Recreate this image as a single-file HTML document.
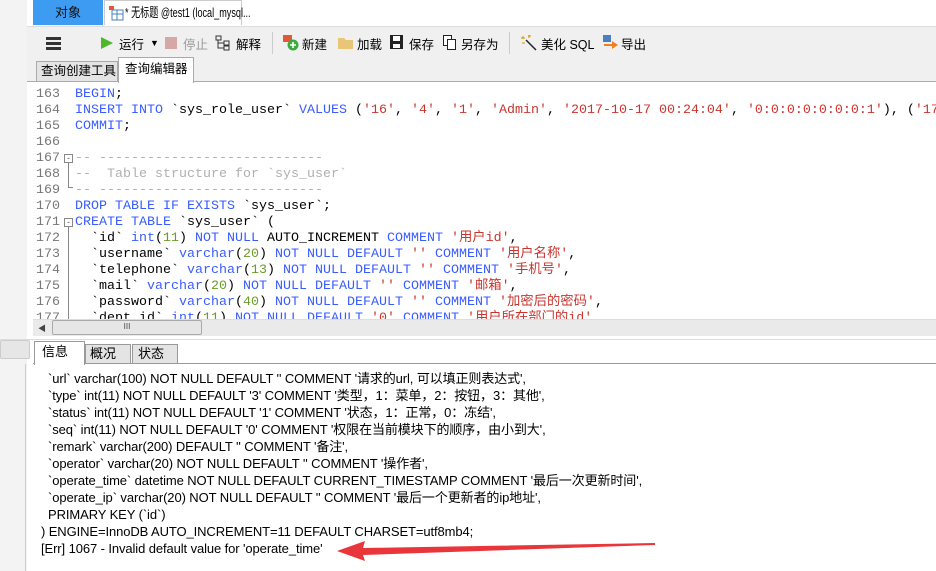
<!DOCTYPE html>
<html><head><meta charset="utf-8"><style>
*{margin:0;padding:0;box-sizing:border-box}
body{width:936px;height:571px;overflow:hidden;background:#fff;font-family:"Liberation Sans","Noto Sans CJK SC",sans-serif;font-size:12px;color:#000;position:relative}
.abs{position:absolute;white-space:nowrap}
.code{font-family:"Liberation Mono","Noto Sans CJK SC",monospace;font-size:13.33px;white-space:pre;line-height:16px}
.k{color:#3a5cff}
.s{color:#c8352e}
.n{color:#6a9a2a}
.c{color:#b0b0b0}
.ln{color:#777}
.tb span{position:absolute;top:34px;font-size:12.5px;white-space:nowrap}
.log{font-size:13px;line-height:17px;white-space:pre;letter-spacing:-0.1px}
</style></head><body>
<div class="abs" style="left:0;top:0;width:936px;height:26px;background:#fff"></div>
<div class="abs" style="left:0;top:0;width:27px;height:571px;background:#f3f3f3"></div>
<div class="abs" style="left:33px;top:0;width:70px;height:25px;background:#3d9bf2;color:#111;font-size:13px;text-align:center;line-height:25px">对象</div>
<div class="abs" style="left:104px;top:0;width:138px;height:25px;border:1px solid #ccc;border-bottom:none"></div>
<div class="abs" style="left:125px;top:0;font-size:13px;line-height:25px;transform:scaleX(0.7);transform-origin:0 50%">* 无标题 @test1 (local_mysql...</div>
<svg class="abs" style="left:108px;top:5px" width="16" height="16"><rect x="1" y="1" width="5" height="4" fill="#e05a3a"/><rect x="4" y="5" width="11" height="10" fill="#fff" stroke="#4a7fc0"/><line x1="4" y1="9" x2="15" y2="9" stroke="#4a7fc0"/><line x1="9" y1="5" x2="9" y2="15" stroke="#4a7fc0"/></svg>
<div class="abs" style="left:27px;top:26px;width:909px;height:32px;background:#f0f0f0;border-top:1px solid #ddd"></div>
<div class="abs tb" style="left:0;top:0;width:936px;height:60px">
<div class="abs" style="left:46px;top:37px;width:15px;height:3px;background:#333;box-shadow:0 5px 0 #333,0 10px 0 #333"></div>
<svg class="abs" style="left:100px;top:36px" width="14" height="14"><polygon points="1,1 13,7 1,13" fill="#4cb82a"/></svg>
<span style="left:119px">运行</span><span style="left:150px;font-size:9px;top:38px">▼</span>
<div class="abs" style="left:165px;top:37px;width:12px;height:12px;background:#d6a7a7"></div>
<span style="left:183px;color:#999">停止</span>
<svg class="abs" style="left:215px;top:35px" width="16" height="16" fill="none" stroke="#333"><rect x="1" y="1" width="5" height="4"/><rect x="9" y="6" width="5" height="4"/><rect x="9" y="11" width="5" height="4"/><path d="M3 5v8h6M3 8h6"/></svg>
<span style="left:236px">解释</span>
<div class="abs" style="left:272px;top:32px;width:1px;height:22px;background:#ccc"></div>
<svg class="abs" style="left:282px;top:34px" width="17" height="17"><rect x="1" y="1" width="9" height="7" fill="#e05a3a"/><circle cx="11" cy="11" r="5.5" fill="#3caa3c"/><path d="M11 8v6M8 11h6" stroke="#fff" stroke-width="1.6"/></svg>
<span style="left:302px">新建</span>
<svg class="abs" style="left:337px;top:36px" width="17" height="14"><path d="M1 2h6l2 2h7v9H1z" fill="#e8c676"/></svg>
<span style="left:357px">加载</span>
<svg class="abs" style="left:389px;top:34px" width="15" height="16"><rect x="1" y="1" width="13" height="14" fill="#222"/><rect x="4" y="2" width="7" height="5" fill="#fff"/><rect x="4" y="10" width="7" height="4" fill="#fff"/></svg>
<span style="left:409px">保存</span>
<svg class="abs" style="left:442px;top:34px" width="15" height="16" fill="#fff" stroke="#222"><rect x="1.5" y="1.5" width="8" height="10"/><rect x="5.5" y="5.5" width="8" height="10"/></svg>
<span style="left:461px">另存为</span>
<div class="abs" style="left:509px;top:32px;width:1px;height:22px;background:#ccc"></div>
<svg class="abs" style="left:520px;top:34px" width="17" height="17" stroke="#222" stroke-width="1.5"><path d="M6 6l10 10"/><path d="M3 2v3M1 4h4M9 1v3M8 2h3M2 9h3" stroke="#c90" stroke-width="1"/></svg>
<span style="left:541px">美化 SQL</span>
<svg class="abs" style="left:602px;top:34px" width="17" height="17"><rect x="1" y="1" width="8" height="7" fill="#4a7fc0"/><path d="M2 10h8V7l6 4-6 4v-3H2z" fill="#f08020"/></svg>
<span style="left:621px">导出</span>
</div>
<div class="abs" style="left:27px;top:58px;width:909px;height:24px;background:#f0f0f0;border-bottom:1px solid #aaa"></div>
<div class="abs" style="left:36px;top:61px;width:82px;height:21px;background:#e4e4e4;border:1px solid #aaa;font-size:12.5px;line-height:19px;padding-left:4px">查询创建工具</div>
<div class="abs" style="left:118px;top:57px;width:76px;height:26px;background:#fff;border:1px solid #aaa;border-bottom:none;font-size:12.5px;line-height:22px;padding-left:6px">查询编辑器</div>
<div class="abs" style="left:33px;top:83px;width:903px;height:236px;background:#fff;overflow:hidden">
<div class="abs code ln" style="left:3px;top:4px">163
164
165
166
167
168
169
170
171
172
173
174
175
176
177</div>
<div class="abs" style="left:31px;top:71px;width:9px;height:9px;border:1px solid #888;font-size:9px;line-height:6px;text-align:center;color:#555">-</div>
<div class="abs" style="left:35px;top:80px;width:5px;height:25px;border-left:1px solid #888;border-bottom:1px solid #888"></div>
<div class="abs" style="left:31px;top:135px;width:9px;height:9px;border:1px solid #888;font-size:9px;line-height:6px;text-align:center;color:#555">-</div>
<div class="abs" style="left:35px;top:144px;width:1px;height:100px;background:#888"></div>
<div class="abs code" style="left:42px;top:4px"><span class="k">BEGIN</span>;
<span class="k">INSERT INTO</span> `sys_role_user` <span class="k">VALUES</span> (<span class="s">'16'</span>, <span class="s">'4'</span>, <span class="s">'1'</span>, <span class="s">'Admin'</span>, <span class="s">'2017-10-17 00:24:04'</span>, <span class="s">'0:0:0:0:0:0:0:1'</span>), (<span class="s">'17</span>
<span class="k">COMMIT</span>;

<span class="c">-- ----------------------------</span>
<span class="c">--  Table structure for `sys_user`</span>
<span class="c">-- ----------------------------</span>
<span class="k">DROP TABLE IF EXISTS</span> `sys_user`;
<span class="k">CREATE TABLE</span> `sys_user` (
  `id` <span class="k">int</span>(<span class="n">11</span>) <span class="k">NOT NULL</span> AUTO_INCREMENT <span class="k">COMMENT</span> <span class="s">'用户id'</span>,
  `username` <span class="k">varchar</span>(<span class="n">20</span>) <span class="k">NOT NULL DEFAULT</span> <span class="s">''</span> <span class="k">COMMENT</span> <span class="s">'用户名称'</span>,
  `telephone` <span class="k">varchar</span>(<span class="n">13</span>) <span class="k">NOT NULL DEFAULT</span> <span class="s">''</span> <span class="k">COMMENT</span> <span class="s">'手机号'</span>,
  `mail` <span class="k">varchar</span>(<span class="n">20</span>) <span class="k">NOT NULL DEFAULT</span> <span class="s">''</span> <span class="k">COMMENT</span> <span class="s">'邮箱'</span>,
  `password` <span class="k">varchar</span>(<span class="n">40</span>) <span class="k">NOT NULL DEFAULT</span> <span class="s">''</span> <span class="k">COMMENT</span> <span class="s">'加密后的密码'</span>,
  `dept_id` <span class="k">int</span>(<span class="n">11</span>) <span class="k">NOT NULL DEFAULT</span> <span class="s">'0'</span> <span class="k">COMMENT</span> <span class="s">'用户所在部门的id'</span>,</div>
</div>
<div class="abs" style="left:33px;top:319px;width:903px;height:17px;background:#eaeaea;border-top:1px solid #ddd"></div>
<div class="abs" style="left:38px;top:323px;font-size:8px;color:#444">◀</div>
<div class="abs" style="left:52px;top:320px;width:150px;height:15px;background:#e6e6e6;border:1px solid #aaa;border-radius:2px;font-size:8px;text-align:center;line-height:12px;color:#444">III</div>
<div class="abs" style="left:0;top:339px;width:936px;height:1px;background:#ddd"></div>
<div class="abs" style="left:0;top:340px;width:30px;height:19px;background:#e6e6e6;border:1px solid #ccc;border-radius:2px"></div>
<div class="abs" style="left:33px;top:340px;width:903px;height:24px;background:#fff;border-bottom:1px solid #999"></div>
<div class="abs" style="left:34px;top:341px;width:51px;height:24px;background:#fff;border:1px solid #999;border-bottom:none;font-size:13px;padding-left:7px;line-height:20px">信息</div>
<div class="abs" style="left:85px;top:344px;width:46px;height:20px;background:#e4e4e4;border:1px solid #999;font-size:13px;padding-left:4px;line-height:18px">概况</div>
<div class="abs" style="left:132px;top:344px;width:46px;height:20px;background:#e4e4e4;border:1px solid #999;font-size:13px;padding-left:5px;line-height:18px">状态</div>
<div class="abs" style="left:25px;top:364px;width:1px;height:207px;background:#ccc"></div>
<div class="abs log" style="left:41px;top:370px">  `url` varchar(100) NOT NULL DEFAULT '' COMMENT '请求的url, 可以填正则表达式',
  `type` int(11) NOT NULL DEFAULT '3' COMMENT '类型，1：菜单，2：按钮，3：其他',
  `status` int(11) NOT NULL DEFAULT '1' COMMENT '状态，1：正常，0：冻结',
  `seq` int(11) NOT NULL DEFAULT '0' COMMENT '权限在当前模块下的顺序，由小到大',
  `remark` varchar(200) DEFAULT '' COMMENT '备注',
  `operator` varchar(20) NOT NULL DEFAULT '' COMMENT '操作者',
  `operate_time` datetime NOT NULL DEFAULT CURRENT_TIMESTAMP COMMENT '最后一次更新时间',
  `operate_ip` varchar(20) NOT NULL DEFAULT '' COMMENT '最后一个更新者的ip地址',
  PRIMARY KEY (`id`)
) ENGINE=InnoDB AUTO_INCREMENT=11 DEFAULT CHARSET=utf8mb4;
[Err] 1067 - Invalid default value for 'operate_time'</div>
<svg class="abs" style="left:335px;top:538px" width="330" height="24"><polygon points="2,13 30,3 28,10 320,5 320,7 28,17 30,23" fill="#e8363a"/></svg>
</body></html>
